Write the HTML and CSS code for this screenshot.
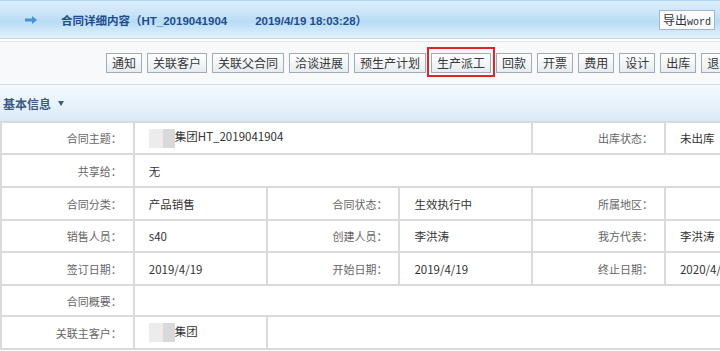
FILE: index.html
```html
<!DOCTYPE html>
<html lang="zh-CN">
<head>
<meta charset="utf-8">
<title>合同详细内容</title>
<link rel="stylesheet" href="styles.css">
</head>
<body>
<div class="page">
  <header class="topbar">
    <svg class="arrow" viewBox="0 0 12 8" aria-hidden="true"><path d="M0 2.4h7V0l5 4-5 4V5.6H0z" fill="#4592da"/></svg>
    <h1 class="title">合同详细内容（HT_2019041904<span class="time">2019/4/19 18:03:28</span>）</h1>
    <button class="export">导出<span class="mono">word</span></button>
  </header>
  <nav class="toolbar">
    <button class="btn">通知</button>
    <button class="btn">关联客户</button>
    <button class="btn">关联父合同</button>
    <button class="btn">洽谈进展</button>
    <button class="btn">预生产计划</button>
    <button class="btn marked">生产派工</button>
    <button class="btn">回款</button>
    <button class="btn">开票</button>
    <button class="btn">费用</button>
    <button class="btn">设计</button>
    <button class="btn">出库</button>
    <button class="btn">退货</button>
  </nav>
  <div class="section-head">基本信息<span class="caret"></span></div>
  <table class="info">
    <colgroup><col class="c"><col class="c"><col class="c"><col class="c"><col class="c"><col class="c"></colgroup>
    <tr class="h32">
      <td class="lbl">合同主题：</td>
      <td class="val" colspan="3"><span class="blur"></span>集团HT_2019041904</td>
      <td class="lbl">出库状态：</td>
      <td class="val">未出库</td>
    </tr>
    <tr class="h33">
      <td class="lbl">共享给：</td>
      <td class="val" colspan="5">无</td>
    </tr>
    <tr class="h33">
      <td class="lbl">合同分类：</td>
      <td class="val">产品销售</td>
      <td class="lbl">合同状态：</td>
      <td class="val">生效执行中</td>
      <td class="lbl">所属地区：</td>
      <td class="val"></td>
    </tr>
    <tr class="h32">
      <td class="lbl">销售人员：</td>
      <td class="val">s40</td>
      <td class="lbl">创建人员：</td>
      <td class="val">李洪涛</td>
      <td class="lbl">我方代表：</td>
      <td class="val">李洪涛</td>
    </tr>
    <tr class="h33">
      <td class="lbl">签订日期：</td>
      <td class="val">2019/4/19</td>
      <td class="lbl">开始日期：</td>
      <td class="val">2019/4/19</td>
      <td class="lbl">终止日期：</td>
      <td class="val">2020/4/19</td>
    </tr>
    <tr class="h31">
      <td class="lbl">合同概要：</td>
      <td class="val" colspan="5"></td>
    </tr>
    <tr class="h33">
      <td class="lbl">关联主客户：</td>
      <td class="val"><span class="blur"></span>集团</td>
      <td class="val" colspan="4"></td>
    </tr>
  </table>
</div>
</body>
</html>
```
FILE: styles.css
```css
html, body {
  margin: 0;
  padding: 0;
  overflow: hidden;
  background: #ffffff;
  font-family: "Noto Sans CJK SC", "Noto Sans", sans-serif;
}

.page {
  width: 720px;
}

.topbar {
  display: flex;
  align-items: center;
  height: 37px;
  padding: 0 5px 0 25px;
  border-top: 1px solid #b0d6f2;
  border-bottom: 1px solid #c8d5de;
  background: linear-gradient(to bottom, #dceefb 0%, #c8e4f8 35%, #b8dcf6 55%, #cfe8f9 80%, #e2f1fc 100%);
}

.arrow {
  flex: none;
  width: 12px;
  height: 8px;
  margin-right: 24px;
}

.title {
  flex: 1;
  margin: 0;
  font-family: "Liberation Sans", "Noto Sans CJK SC", sans-serif;
  font-size: 11.5px;
  font-weight: bold;
  color: #1f4d8c;
  white-space: nowrap;
}

.time {
  margin-left: 28px;
}

.export {
  flex: none;
  height: 20px;
  padding: 0 3px;
  border: 1px solid #a9b4bd;
  background: #f9fbfc;
  font-family: "Noto Sans CJK SC", sans-serif;
  font-size: 12px;
  line-height: 18px;
  color: #333333;
}

.mono {
  font-family: "Liberation Mono", monospace;
  font-size: 10px;
}

.toolbar {
  display: flex;
  gap: 5px;
  margin-top: 2px;
  padding: 11px 0 11px 106px;
  border-top: 1px solid #dde4ea;
  border-bottom: 1px solid #d6dde3;
  background: #f7f9fa;
  white-space: nowrap;
}

.btn {
  flex: none;
  box-sizing: border-box;
  height: 20px;
  padding: 0 5px;
  border: 1px solid #a3acb4;
  background: linear-gradient(to bottom, #ffffff 0%, #f3f6f8 50%, #e6ecf0 100%);
  font-family: "Noto Sans CJK SC", sans-serif;
  font-size: 12px;
  line-height: 18px;
  color: #383838;
}

.btn.marked {
  position: relative;
}

.btn.marked::after {
  content: "";
  position: absolute;
  left: -5px;
  right: -5px;
  top: -7px;
  bottom: -5px;
  border: 2px solid #e02424;
}

.section-head {
  display: flex;
  align-items: center;
  height: 36px;
  padding-left: 3px;
  background: linear-gradient(to bottom, #f3f9fd 0%, #e6f2fb 60%, #d8eaf8 100%);
  font-size: 12px;
  font-weight: bold;
  color: #3d5b82;
}

.caret {
  width: 0;
  height: 0;
  margin-left: 7px;
  border-left: 3.5px solid transparent;
  border-right: 3.5px solid transparent;
  border-top: 5px solid #3d5b82;
}

.info {
  width: 797px;
  table-layout: fixed;
  border-collapse: collapse;
  border: 2px solid #dadada;
}

.info .c {
  width: 132.8px;
}

.info td {
  border: 2px solid #dadada;
  padding: 0;
  vertical-align: middle;
  white-space: nowrap;
  overflow: hidden;
}

.h31 { height: 31px; }
.h32 { height: 32px; }
.h33 { height: 33px; }

.lbl {
  padding-right: 11px !important;
  text-align: right;
  font-size: 11px;
  color: #666666;
}

.val {
  padding-left: 14px !important;
  text-align: left;
  font-size: 11.5px;
  color: #333333;
}

.blur {
  display: inline-block;
  width: 26px;
  height: 19px;
  vertical-align: middle;
  background: linear-gradient(to right, #ececec 0, #ececec 14px, #d9d9d9 14px, #d9d9d9 100%);
}
```
